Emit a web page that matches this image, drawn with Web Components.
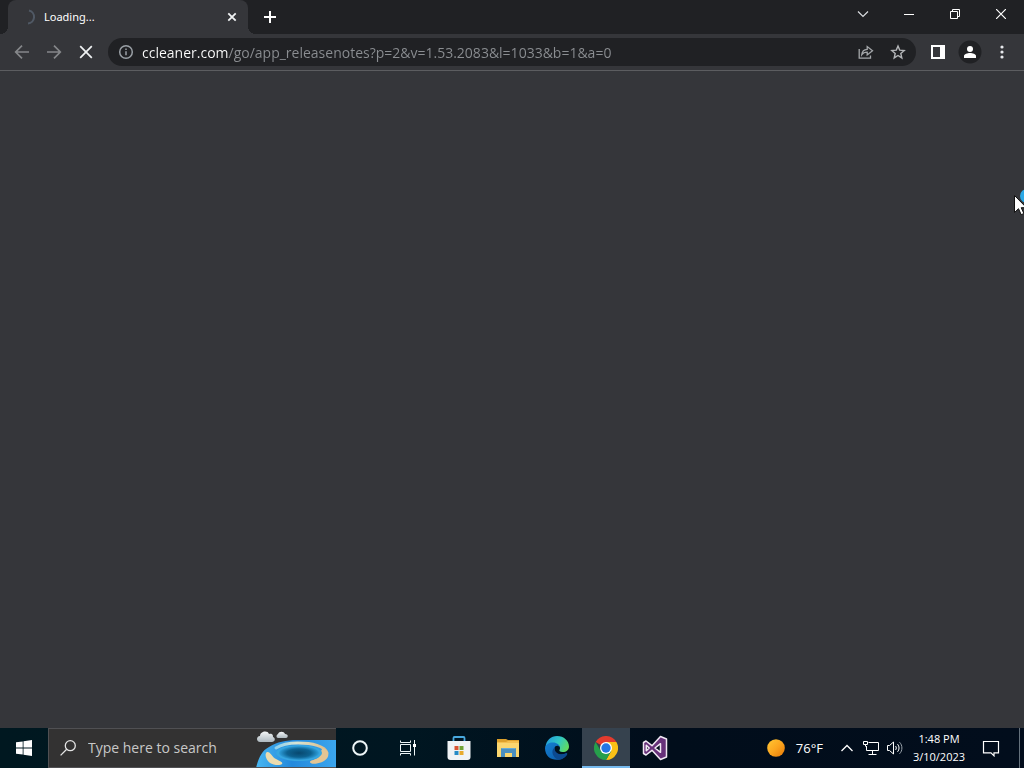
<!DOCTYPE html>
<html lang="en">
<head>
<meta charset="utf-8">
<title>Loading...</title>
<style>
	html, body { height: 100%; margin: 0; }
	body { overflow: hidden; font-family: "Open Sans", "Noto Sans", sans-serif; color: #fff; background: #35363a; }
</style>
</head>
<body>
<desktop-screen></desktop-screen>

<script>
// <icon-button>
// Attributes:
//   label - accessible name of the button.
// The slot takes the icon. Size and shape come from --w, --h, --bg and --radius.
class IconButton extends HTMLElement {
	connectedCallback() {
		var shadow = this.attachShadow({mode: "open"});
		shadow.innerHTML = `<style>
			:host { display: block; flex: none; width: var(--w, 28px); height: var(--h, 28px); }
			button { display: flex; align-items: center; justify-content: center; width: 100%; height: 100%; margin: 0; padding: 0; border: 0; border-radius: var(--radius, 0); background: var(--bg, none); color: inherit; }
			button:hover { background: var(--bg, #ffffff18); }
		</style><button type="button"><slot></slot></button>`;
		shadow.querySelector("button").setAttribute("aria-label", this.getAttribute("label"));
	}
}
customElements.define("icon-button", IconButton);

// <browser-tab> - the slot takes the page title.
class BrowserTab extends HTMLElement {
	connectedCallback() {
		this.attachShadow({mode: "open"}).innerHTML = `<style>
			:host { position: relative; display: flex; align-items: center; gap: 8px; box-sizing: border-box; width: 240px; padding: 0 8px 0 12px; border-radius: 8px 8px 0 0; background: #35363a; font: 11px/16px "Noto Sans", sans-serif; }
			:host::before, :host::after { content: ""; position: absolute; bottom: 0; width: 8px; height: 8px; }
			:host::before { right: 100%; background: radial-gradient(circle at 0 0, transparent 8px, #35363a 8px); }
			:host::after { left: 100%; background: radial-gradient(circle at 100% 0, transparent 8px, #35363a 8px); }
			.title { flex: 1; overflow: hidden; white-space: nowrap; text-overflow: ellipsis; }
			icon-button { --w: 16px; --h: 16px; --radius: 8px; }
		</style>
		<svg width="16" height="16" fill="none" stroke="#505965" stroke-width="2"><path d="M9 1.5a6.6 6.6 0 0 1-1 13"/></svg>
		<span class="title"><slot></slot></span>
		<icon-button label="Close tab"><svg width="16" height="16" stroke="#f1f3f4" stroke-width="1.8"><path d="M4.3 4.3l7.4 7.4M11.7 4.3l-7.4 7.4"/></svg></icon-button>`;
	}
}
customElements.define("browser-tab", BrowserTab);

// <address-bar>
// Attributes:
//   value - the address; its host part is drawn brighter.
class AddressBar extends HTMLElement {
	connectedCallback() {
		var shadow = this.attachShadow({mode: "open"});
		shadow.innerHTML = `<style>
			:host { display: flex; align-items: center; flex: 1; min-width: 0; gap: 4px; box-sizing: border-box; height: 28px; padding: 0 4px; border-radius: 14px; background: #202124; color: #9aa0a6; }
			icon-button { --radius: 14px; }
			form { flex: 1; min-width: 0; display: flex; margin: 0 0 0 -2px; }
			input { flex: 1; min-width: 0; height: 24px; padding: 0; border: 0; outline: 0; font: 14px/20px "Open Sans", "Noto Sans", sans-serif; color: #fff; background: linear-gradient(90deg, #fff var(--host), #8b8e92 var(--host)); background-clip: text; -webkit-background-clip: text; -webkit-text-fill-color: transparent; }
		</style>
		<icon-button label="View site information"><svg width="16" height="16" fill="none" stroke="#9aa0a6" stroke-width="1.5"><circle cx="8" cy="8" r="6.3"/><path d="M8 7.2v4M8 4.4v1.6"/></svg></icon-button>
		<form><input type="text" aria-label="Address and search bar" spellcheck="false"></form>
		<icon-button label="Share this page"><svg width="16" height="16" fill="none" stroke="#a4a7aa" stroke-width="1.3"><path d="M1.2 5v9.2h11.3v-2.7M3.8 10.6c.3-3.2 2.2-5 5.4-5.2V2.6l5.3 4.2-5.3 4.1V8.2c-2.6 0-4.2.7-5.4 2.4z"/></svg></icon-button>
		<icon-button label="Bookmark this tab"><svg width="16" height="16" fill="none" stroke="#b4b6b9" stroke-width="1.4"><path d="M8 2l1.7 4.1 4.5.4-3.4 3 1 4.4L8 11.5l-3.8 2.4 1-4.4-3.4-3 4.5-.4z"/></svg></icon-button>`;
		var input = shadow.querySelector("input");
		input.value = this.getAttribute("value");
		// the bright part ends where the host name does
		var pen = document.createElement("canvas").getContext("2d");
		pen.font = '14px "Open Sans", "Noto Sans", sans-serif';
		input.style.setProperty("--host", Math.round(pen.measureText(input.value.split("/")[0]).width) + "px");
	}
}
customElements.define("address-bar", AddressBar);

// <browser-window> - tab strip, toolbar and the empty page below them.
class BrowserWindow extends HTMLElement {
	connectedCallback() {
		this.attachShadow({mode: "open"}).innerHTML = `<style>
			:host { display: flex; flex-direction: column; background: #35363a; }
			header { display: flex; height: 34px; padding-left: 8px; background: #202124; }
			.new { margin: 3px 0 0 8px; --radius: 14px; }
			.caption { display: flex; margin-left: auto; --w: 46px; }
			nav { display: flex; align-items: center; gap: 4px; box-sizing: border-box; height: 37px; padding: 0 8px; border-bottom: 1px solid #5c5d60; --radius: 14px; }
			address-bar { margin: 0 4px; }
			.profile { --bg: radial-gradient(circle, #202124 11px, transparent 12px); }
			.profile svg { display: block; }
			main { flex: 1; }
		</style>
		<header>
			<browser-tab>Loading...</browser-tab>
			<icon-button class="new" label="New tab"><svg width="16" height="16" stroke="#fff" stroke-width="2"><path d="M8 2v12M2 8h12"/></svg></icon-button>
			<div class="caption">
				<icon-button label="Search tabs"><svg width="12" height="12" fill="none" stroke="#dadce0" stroke-width="1.2"><path d="M1 3.5l5 5 5-5"/></svg></icon-button>
				<icon-button label="Minimize"><svg width="10" height="10"><path fill="#fff" d="M0 5h10v1H0z"/></svg></icon-button>
				<icon-button label="Restore"><svg width="10" height="10" fill="none" stroke="#fff"><path d="M.5 2.5h7v7h-7zM2.5 2.5v-2h7v7h-2"/></svg></icon-button>
				<icon-button label="Close"><svg width="10" height="10" stroke="#fff" stroke-width="1.2"><path d="M0 0l10 10M10 0L0 10"/></svg></icon-button>
			</div>
		</header>
		<nav>
			<icon-button label="Back"><svg width="16" height="16" fill="none" stroke="#85878a" stroke-width="1.7"><path d="M15 8H2M8 1.7L1.7 8 8 14.3"/></svg></icon-button>
			<icon-button label="Forward"><svg width="16" height="16" fill="none" stroke="#85878a" stroke-width="1.7"><path d="M1 8h13M8 1.7L14.3 8 8 14.3"/></svg></icon-button>
			<icon-button label="Stop loading"><svg width="16" height="16" stroke="#f1f3f4" stroke-width="1.7"><path d="M2.2 2.2l11.6 11.6M13.8 2.2L2.2 13.8"/></svg></icon-button>
			<address-bar value="ccleaner.com/go/app_releasenotes?p=2&amp;v=1.53.2083&amp;l=1033&amp;b=1&amp;a=0"></address-bar>
			<icon-button label="Side panel"><svg width="16" height="16"><path fill="#fff" fill-rule="evenodd" d="M1 1h14v14H1zM3 3v10h7V3z"/></svg></icon-button>
			<icon-button class="profile" label="You"><svg width="16" height="16" fill="#fff"><circle cx="8" cy="5" r="3"/><path d="M2 14v-2c0-2 3.5-3 6-3s6 1 6 3v2z"/></svg></icon-button>
			<icon-button label="Customize and control"><svg width="16" height="16" fill="#e8eaed"><circle cx="8" cy="3" r="1.6"/><circle cx="8" cy="8" r="1.6"/><circle cx="8" cy="13" r="1.6"/></svg></icon-button>
		</nav>
		<main></main>`;
	}
}
customElements.define("browser-window", BrowserWindow);

// <search-box> - taskbar search with the seasonal picture at its end.
class SearchBox extends HTMLElement {
	connectedCallback() {
		this.attachShadow({mode: "open"}).innerHTML = `<style>
			:host { display: flex; align-items: center; box-sizing: border-box; width: 288px; height: 40px; padding-left: 11px; border: 1px solid #505053; border-width: 1px 0 1px 1px; background: #333232; }
			label { display: flex; margin-right: 12px; }
			input { flex: 1; min-width: 0; padding: 0; border: 0; outline: 0; background: none; color: #fff; font: 14px/20px "Open Sans", "Noto Sans", sans-serif; }
			input::placeholder { color: #c8c8c8; opacity: 1; }
			svg { flex: none; }
		</style>
		<label for="q"><svg width="16" height="16" fill="none" stroke="#e4e4e4" stroke-width="1.3"><circle cx="10.3" cy="5.7" r="5"/><path d="M6.7 9.3L.6 15.4"/></svg></label>
		<input id="q" type="text" aria-label="Search" placeholder="Type here to search">
		<svg width="80" height="38" viewBox="0 1 80 38">
			<defs>
				<linearGradient id="sea" x1="0" x2="1"><stop offset="0" stop-color="#48b6f1"/><stop offset=".45" stop-color="#2389dc"/><stop offset="1" stop-color="#3ba6ee"/></linearGradient>
				<linearGradient id="sand" x1="0" x2="1"><stop offset="0" stop-color="#8fd0ea"/><stop offset=".4" stop-color="#d6e5d5"/><stop offset="1" stop-color="#e0bb83"/></linearGradient>
				<linearGradient id="cloud" y2="1" x2="0"><stop offset="0" stop-color="#f3f5f6"/><stop offset="1" stop-color="#aeb9c0"/></linearGradient>
				<radialGradient id="hole"><stop offset="0" stop-color="#07486f"/><stop offset=".6" stop-color="#0d6291"/><stop offset="1" stop-color="#2f9fdb"/></radialGradient>
			</defs>
			<path fill="url(#sea)" d="M0 40c2-8 5-17 13-21 8-5 17-7 28-7h39v28z"/>
			<path fill="none" stroke="url(#sand)" stroke-width="3" stroke-linecap="round" d="M20 20c6-4 14-5 22-5 14 0 27 3 29 10"/>
			<path fill="#e3c593" d="M67 20c7 3 7 9 1 13-5 3-14 4-14 1 0-2 6-2 9-5 3-4 1-6 4-9z"/>
			<ellipse cx="43" cy="25" rx="23" ry="8" fill="#37a6e0"/>
			<ellipse cx="43" cy="25" rx="20" ry="7" fill="url(#hole)"/>
			<path fill="#ecdcae" d="M11 24c3-1 5 5 9 7 5 3 7 3 6 5-2 2-9 1-12-1-4-3-6-9-3-11z"/>
			<g fill="url(#cloud)"><path d="M4 14c-4 0-4-6 0-6 0-5 8-6 9-2 4-1 4 2 4 3 3 1 2 5-1 5z"/><path d="M22 10c-2 0-2-3 0-4 1-3 6-3 7 0 4 0 3 4 1 4z"/></g>
		</svg>`;
	}
}
customElements.define("search-box", SearchBox);

// <system-tray> - weather, status icons, clock and notifications.
class SystemTray extends HTMLElement {
	connectedCallback() {
		this.attachShadow({mode: "open"}).innerHTML = `<style>
			:host { display: flex; align-items: center; height: 40px; font-size: 13px; line-height: 18px; }
			.weather { display: flex; align-items: center; gap: 11px; height: 40px; margin-right: 12px; padding: 0; border: 0; background: none; color: inherit; font: inherit; }
			.status { --w: 24px; --h: 40px; }
			.clock { width: 56px; margin-left: 4px; padding: 0; border: 0; background: none; color: inherit; font: 11px/18px "Open Sans", "Noto Sans", sans-serif; text-align: center; white-space: nowrap; }
			.clock time { display: block; }
			.notes { --w: 48px; --h: 40px; margin-right: 4px; }
			.desktop { --w: 5px; --h: 40px; box-sizing: border-box; border-left: 1px solid #65717c; }
		</style>
		<button class="weather" type="button"><svg width="18" height="18"><defs><linearGradient id="sun" x1="0" y1="0" x2="1" y2="1"><stop offset="0" stop-color="#ffc735"/><stop offset=".5" stop-color="#fca61f"/><stop offset="1" stop-color="#e67706"/></linearGradient></defs><circle cx="9" cy="9" r="8.8" fill="url(#sun)"/></svg><span>76°F</span></button>
		<icon-button class="status" label="Show hidden icons"><svg width="14" height="14" fill="none" stroke="#fff" stroke-width="1.3"><path d="M1.5 10L7 4.5l5.5 5.5"/></svg></icon-button>
		<icon-button class="status" label="Network"><svg width="16" height="16" fill="none" stroke="#fff"><path d="M5.5 2.5h10v8h-12V6M9.500 10.5v4M5.5 14.500h8M.5 1.500h4v3h-4zM2.500 4.500v2"/></svg></icon-button>
		<icon-button class="status" label="Speakers"><svg width="16" height="16" fill="none" stroke="#fff"><path d="M.5 5.5h2l4-3.500v12l-4-3.500h-2zM8.500 6c1 1 1 3 0 4M10.500 4.200c2 2 2 5.600 0 7.600"/><path stroke="#9aa3ab" d="M12.500 2.200c3.200 3 3.200 8.600 0 11.600"/></svg></icon-button>
		<button class="clock" type="button"><time>1:48 PM</time><time>3/10/2023</time></button>
		<icon-button class="notes" label="Notifications"><svg width="18" height="18" fill="none" stroke="#fff" stroke-width="1.2"><path d="M1.500 2.500h15v11.300h-4.500v3l-3-3H1.500z"/></svg></icon-button>
		<icon-button class="desktop" label="Show desktop"></icon-button>`;
	}
}
customElements.define("system-tray", SystemTray);

// <task-bar>
class TaskBar extends HTMLElement {
	connectedCallback() {
		this.attachShadow({mode: "open"}).innerHTML = `<style>
			:host { display: flex; height: 40px; background: linear-gradient(90deg, #001820, #001621 40%, #010d1b 65%, #020d1c); --w: 48px; --h: 40px; }
			.apps { display: flex; gap: 1px; margin-left: 3px; }
			.active { --bg: linear-gradient(#36424e 38px, #76b9ed 38px); }
			system-tray { margin-left: auto; }
		</style>
		<icon-button label="Start"><svg width="16" height="16" fill="#fff"><path d="M0 2.300L6.700 1.400v6.200H0zM7.500 1.300L16 0v7.600H7.500zM0 8.400h6.700v6.200L0 13.700zM7.500 8.400H16V16l-8.500-1.300z"/></svg></icon-button>
		<search-box></search-box>
		<icon-button label="Cortana"><svg width="18" height="18" fill="none" stroke="#eef6f8" stroke-width="2"><circle cx="9" cy="9" r="6.800"/></svg></icon-button>
		<icon-button label="Task View"><svg width="18" height="18" fill="none" stroke="#eef6f8"><path d="M1.500 1.500v2h10v-2M1.500 5.500h10v7h-10zM1.500 16.500v-2h10v2M15.500 1v15.500"/><path fill="#fff" stroke="none" d="M14 5h3v3h-3z"/></svg></icon-button>
		<div class="apps">
			<icon-button label="Microsoft Store"><svg width="24" height="24">
				<path fill="none" stroke="#48a9df" stroke-width="1.800" d="M6.500 5.500V2q0-1 1-1h9q1 0 1 1v3.500"/>
				<path fill="#f0f3f5" d="M.500 5h23v16q0 3-3 3h-17q-3 0-3-3z"/>
				<path fill="#d95432" d="M7.500 10h4v4h-4z"/><path fill="#71a436" d="M12.500 10h4v4h-4z"/><path fill="#278bc6" d="M7.500 15h4v4h-4z"/><path fill="#e8ab2c" d="M12.500 15h4v4h-4z"/>
			</svg></icon-button>
			<icon-button label="File Explorer"><svg width="24" height="24">
				<path fill="#dda02b" d="M1 3h9l2 1h11v5H1z"/><path fill="#fbd66f" d="M1 6h22v15H1z"/><path fill="#f4bf4e" d="M1 6h9l2-1h11v2H1z"/>
				<path fill="#4a8fc0" d="M5 21v-8q0-1 1-1h13q1 0 1 1v8h-4v-4H9v4z"/><path fill="#67acd6" d="M6 12h13v1H6z"/>
			</svg></icon-button>
			<icon-button label="Microsoft Edge"><svg width="24" height="24">
				<defs>
					<linearGradient id="top" x1="0" y1=".3" x2="1" y2=".7"><stop offset="0" stop-color="#239ddd"/><stop offset=".5" stop-color="#30c7c3"/><stop offset="1" stop-color="#65dc57"/></linearGradient>
					<linearGradient id="low" x1="0" y1="0" x2="1" y2="1"><stop offset="0" stop-color="#147fd2"/><stop offset="1" stop-color="#0b58a4"/></linearGradient>
				</defs>
				<path fill="url(#top)" d="M.500 11C1 4.500 6 0 12 0c7 0 12 5 12 10.500 0 3.500-2.500 5.500-6.300 5.500-3 0-3.700-1.200-3.200-2 1-1.500.7-4.500-2.500-5.500C7 7.200 2.800 8 .500 11z"/>
				<path fill="url(#low)" d="M0 12C.5 8.500 4 6.500 8 6.500c4 0 6.700 2.500 6.700 5-1-2.300-4.700-2.300-5.200.8C8.700 17 14 20.500 20.500 17.500c1.500-.5 2 .2 1.500.9C17 26.500 0 26 0 12z"/>
				<path fill="#0c4a90" d="M9.500 11.500C5.500 15 7.500 21.500 13.500 23.800c3 0 7-2.400 8.500-5.400.5-.7 0-1.400-1-.9-5.500 2.500-12-.5-11.500-6z"/>
			</svg></icon-button>
			<icon-button class="active" label="Google Chrome"><svg width="24" height="24" viewBox="0 0 24 24">
				<path fill="#e33b2e" d="M12 12L1.600 6A12 12 0 0 1 22.400 6z"/>
				<path fill="#fbc116" d="M12 6h10.400A12 12 0 0 1 12 24l5.200-9z"/>
				<path fill="#269f4b" d="M1.600 6A12 12 0 0 0 12 24l5.200-9L12 12l-5.200 3z"/>
				<circle cx="12" cy="12" r="6" fill="#fff"/><circle cx="12" cy="12" r="4.700" fill="#2476e4"/>
			</svg></icon-button>
			<icon-button label="Visual Studio"><svg width="26" height="26" viewBox="0 0 26 26">
				<path fill="#67317a" fill-rule="evenodd" stroke="#f1e9f4" stroke-width="1.500" stroke-linejoin="round" d="M1.500 7.500L4 6l6 4.700L18.500 1.500l6 2.500v18l-6 2.500L10 15.300 4 20l-2.500-1.500zM4.300 10.200v5.600L7.200 13zM18.500 8.700L13 13l5.500 4.300z"/>
			</svg></icon-button>
		</div>
		<system-tray></system-tray>`;
	}
}
customElements.define("task-bar", TaskBar);

// <mouse-pointer> - the arrow with its busy ring, lying over the window's edge.
class MousePointer extends HTMLElement {
	connectedCallback() {
		this.attachShadow({mode: "open"}).innerHTML = `<style>
			:host { position: absolute; top: 188px; right: 0; width: 10px; height: 28px; overflow: hidden; pointer-events: none; }
			svg { display: block; }
		</style>
		<svg width="24" height="28"><circle cx="13" cy="8" r="5" fill="none" stroke="#2ba8e6" stroke-width="4"/><path fill="#fff" stroke="#111" d="M.500 7.500v17l4-3.800 2.700 6 2.700-1.200-2.700-5.800h5.300z"/></svg>`;
	}
}
customElements.define("mouse-pointer", MousePointer);

// <desktop-screen>
class DesktopScreen extends HTMLElement {
	connectedCallback() {
		this.attachShadow({mode: "open"}).innerHTML = `<style>
			:host { position: relative; display: flex; flex-direction: column; height: 100vh; overflow: hidden; }
			browser-window { flex: 1; min-height: 0; }
			task-bar { flex: none; }
		</style>
		<browser-window></browser-window>
		<task-bar></task-bar>
		<mouse-pointer></mouse-pointer>`;
	}
}
customElements.define("desktop-screen", DesktopScreen);
</script>
</body>
</html>
